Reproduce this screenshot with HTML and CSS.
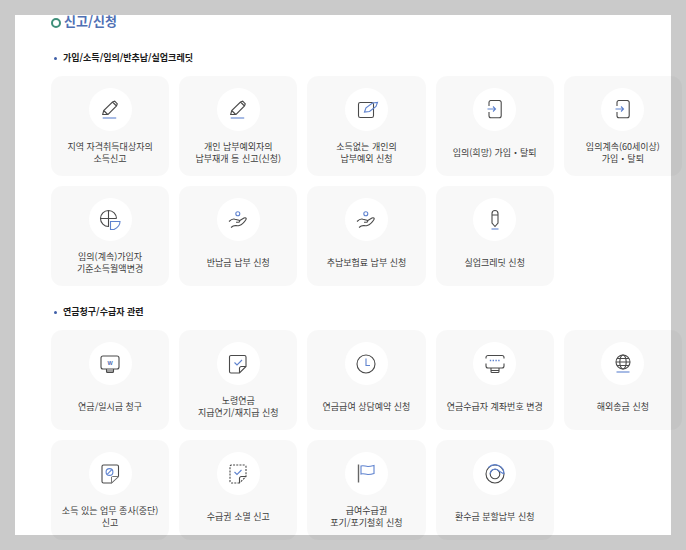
FILE: index.html
```html
<!DOCTYPE html>
<html lang="ko">
<head>
<meta charset="utf-8">
<title>신고/신청</title>
<link rel="stylesheet" href="styles.css">
</head>
<body>
<main class="panel">
  <h2 class="title">신고/신청</h2>
  <h3 class="sub">가입/소득/임의/반추납/실업크레딧</h3>
  <ul class="grid">
    <li class="card"><span class="ico"><svg viewBox="0 0 20 20"><use href="#i-pen"/></svg></span><p>지역 자격취득대상자의<br>소득신고</p></li>
    <li class="card"><span class="ico"><svg viewBox="0 0 20 20"><use href="#i-pen"/></svg></span><p>개인 납부예외자의<br>납부재개 등 신고(신청)</p></li>
    <li class="card"><span class="ico"><svg viewBox="0 0 20 20"><rect class="k" x="2.500" y="2.500" width="15" height="15" rx="1.800"/><path class="b" d="M8.500 12l1.500-4.200L16.500 3l5 -.5-1.500 4-6.500 5z"/></svg></span><p>소득없는 개인의<br>납부예외 신청</p></li>
    <li class="card"><span class="ico"><svg viewBox="0 0 20 20"><use href="#i-door"/></svg></span><p>임의(희망) 가입・탈퇴</p></li>
    <li class="card"><span class="ico"><svg viewBox="0 0 20 20"><use href="#i-door"/></svg></span><p>임의계속(60세이상)<br>가입・탈퇴</p></li>
    <li class="card"><span class="ico"><svg viewBox="0 0 20 20"><path class="k" d="M9 16.500H8.500a8 8 0 1 1 8-8M8.500 .5v16M.5 8.500h16"/><path class="b" d="M10.500 11.500H20c0 3-2 6-6 8h-3.500z"/></svg></span><p>임의(계속)가입자<br>기준소득월액변경</p></li>
    <li class="card"><span class="ico"><svg viewBox="0 0 20 20"><use href="#i-hand"/></svg></span><p>반납금 납부 신청</p></li>
    <li class="card"><span class="ico"><svg viewBox="0 0 20 20"><use href="#i-hand"/></svg></span><p>추납보험료 납부 신청</p></li>
    <li class="card"><span class="ico"><svg viewBox="0 0 20 20"><path class="k" d="M7 3.500a3 3 0 0 1 6 0V13l-3 3.500L7 13zM7 5h6"/><path class="b" d="M6.500 19h7"/></svg></span><p>실업크레딧 신청</p></li>
  </ul>
  <h3 class="sub sub-next">연금청구/수급자 관련</h3>
  <ul class="grid">
    <li class="card"><span class="ico"><svg viewBox="0 0 20 20"><rect class="k" x="1" y="2" width="18" height="13" rx="2"/><path class="k" d="M6.500 15v2.500a1 1 0 0 0 1 1h5a1 1 0 0 0 1-1V15M6.500 17h7"/><text class="won" x="10" y="10.700">W</text></svg></span><p>연금/일시금 청구</p></li>
    <li class="card"><span class="ico"><svg viewBox="0 0 20 20"><path class="k" d="M11.500 19H3a1.500 1.500 0 0 1-1.500-1.500V3A1.500 1.500 0 0 1 3 1.500h13.500A1.500 1.500 0 0 1 18 3v9.500z"/><path class="k" d="M11.500 19v-4a2 2 0 0 1 2-2.500H18"/><path class="b" d="M6.500 8.500l2.500 2.500 5-5"/></svg></span><p>노령연금<br>지급연기/재지급 신청</p></li>
    <li class="card"><span class="ico"><svg viewBox="0 0 20 20"><circle class="k" cx="10" cy="10" r="9"/><path class="b" d="M10 4.500V11.500h4"/></svg></span><p>연금급여 상담예약 신청</p></li>
    <li class="card"><span class="ico"><svg viewBox="0 0 20 20"><path class="k" d="M1 4.500V3.500a2 2 0 0 1 2-2h14a2 2 0 0 1 2 2v1M1 9.500v2.500a2 2 0 0 0 2 2h14a2 2 0 0 0 2-2V9.500M6 14.500v3a1 1 0 0 0 1 1h6a1 1 0 0 0 1-1v-3M6 16.500h8"/><path class="dots" d="M4.800 6.500h11"/></svg></span><p>연금수급자 계좌번호 변경</p></li>
    <li class="card"><span class="ico"><svg viewBox="0 0 20 20"><circle class="k" cx="10" cy="8" r="7"/><ellipse class="k" cx="10" cy="8" rx="3.200" ry="7"/><path class="k" d="M3 8h14M4 4.500h12M4 11.500h12"/><path class="b" d="M3.500 18h13"/></svg></span><p>해외송금 신청</p></li>
    <li class="card"><span class="ico"><svg viewBox="0 0 20 20"><path class="k" d="M11.500 19H3.500A1.500 1.500 0 0 1 2 17.500V2.500A1.500 1.500 0 0 1 3.500 1h13.500A1.500 1.500 0 0 1 18.500 2.500V12.500z"/><path class="f" d="M11.500 19V13a1 1 0 0 1 1-.5h6z"/><circle class="b" cx="9.500" cy="8" r="3.400"/><path class="b" d="M7.200 10.300l4.600-4.600"/></svg></span><p>소득 있는 업무 종사(중단)<br>신고</p></li>
    <li class="card"><span class="ico"><svg viewBox="0 0 20 20"><path class="dash" d="M11.500 19H3.500A1.500 1.500 0 0 1 2 17.500V2.500A1.500 1.500 0 0 1 3.500 1h13A1.500 1.500 0 0 1 18 2.500V12.500z"/><path class="k" d="M11.500 19V15a2 2 0 0 1 2-2.500H18"/><path class="b" d="M6.500 8l2.500 2.500 4.500-4.500"/></svg></span><p>수급권 소멸 신고</p></li>
    <li class="card"><span class="ico"><svg viewBox="0 0 20 20"><path class="p" d="M2.500 .5v18"/><path class="b" d="M5 2c3-1 4 .5 7 .5 2 0 4-.5 6-1v8c-2 .7-4 1-6 1-3 0-4-1.500-7-.5z"/></svg></span><p>급여수급권<br>포기/포기철회 신청</p></li>
    <li class="card"><span class="ico"><svg viewBox="0 0 20 20"><circle class="k" cx="10" cy="10" r="9"/><circle class="k" cx="10" cy="10" r="4.800"/><path class="b" d="M3.500 3.500a9 9 0 0 1 15.500 6.500M5.200 10a4.800 4.800 0 0 1 8.300-3.300l5.500 3.300"/></svg></span><p>환수금 분할납부 신청</p></li>
  </ul>
</main>
<svg class="defs" aria-hidden="true">
  <symbol id="i-pen" viewBox="0 0 20 20"><path class="k" d="M2.700 14.500l1-4L12.500 2l2.200-.8 2.600 2.600-.8 2.200-8.500 8.500zM3.700 10.500l4 4M12.500 2l4 4"/><path class="b" d="M2.700 18h13.500"/></symbol>
  <symbol id="i-door" viewBox="0 0 20 20"><path class="k" d="M4 6V2.500a2 2 0 0 1 2-2h8.200a2 2 0 0 1 2 2v13.300a2 2 0 0 1-2 2H6a2 2 0 0 1-2-2V12"/><path class="b" d="M2.500 9h8M8 6.500L10.500 9 8 11.500"/></symbol>
  <symbol id="i-hand" viewBox="0 0 20 20"><circle class="b" cx="9.800" cy="3.800" r="2"/><path class="k" d="M1 11.500c2-2 4-3 6-2.300l4 1c1.200.5.800 2-.5 2.100H8M11 11l5-3c1.500-.8 2.700.4 2 1.500-1.500 2.500-3.500 5-6.800 6-2.500.7-4-.5-6 .5L3 17.500"/></symbol>
</svg>
</body>
</html>
```
FILE: styles.css
```css
* { box-sizing: border-box; }
html { overflow: hidden; height: 100%; }
body {
  margin: 0;
  height: 100%;
  padding: 15px;
  background: #cacaca;
  overflow: hidden;
  font-family: "Noto Sans CJK KR", "Noto Sans", sans-serif;
  color: #333;
}
.panel {
  width: 656px;
  height: 520px;
  background: #fff;
  padding: 0 0 0 36px;
}
.title {
  position: relative;
  margin: 0;
  padding-left: 13px;
  height: 14px;
  font-size: 13px;
  line-height: 11px;
  font-weight: 700;
  color: #4f70b4;
}
.title::before {
  content: "";
  position: absolute;
  left: 0;
  top: 3px;
  width: 6px;
  height: 6px;
  border: 2px solid #3f8f7a;
  border-radius: 50%;
}
.sub {
  position: relative;
  margin: 22px 0 0;
  padding-left: 12px;
  height: 13px;
  font-size: 9px;
  line-height: 13px;
  font-weight: 700;
  color: #1a1a1a;
}
.sub::before {
  content: "";
  position: absolute;
  left: 3px;
  top: 6px;
  width: 3px;
  height: 3px;
  border-radius: 50%;
  background: #3f5fa8;
}
.sub-next { margin-top: 19px; }
.grid {
  list-style: none;
  margin: 12px 0 0;
  padding: 0;
  width: 631px;
  display: grid;
  grid-template-columns: repeat(5, 1fr);
  grid-auto-rows: 100px;
  gap: 10px;
}
.card {
  display: flex;
  flex-direction: column;
  align-items: center;
  padding-top: 12px;
  border-radius: 11px;
  background: rgba(0, 0, 0, 0.028);
}
.ico {
  flex: none;
  width: 43px;
  height: 43px;
  border-radius: 50%;
  background: #fff;
  display: flex;
  align-items: center;
  justify-content: center;
}
.ico svg { width: 20px; height: 20px; overflow: visible; }
.card p {
  margin: auto 0;
  text-align: center;
  font-size: 9px;
  line-height: 12.500px;
  padding-bottom: 1px;
  color: #3c3c3c;
}
.k { fill: none; stroke: #4a4a4a; stroke-width: 1.100; }
.b { fill: none; stroke: #5f83cf; stroke-width: 1.100; }
.f { fill: #fff; stroke: #777; stroke-width: 1; }
.p { fill: none; stroke: #666; stroke-width: 1.400; }
.dash { fill: none; stroke: #4a4a4a; stroke-width: 1.100; stroke-dasharray: 2 1.200; }
.dots { fill: none; stroke: #5f83cf; stroke-width: 1.400; stroke-dasharray: 1.400 1.400; }
.won { font-size: 5.500px; font-weight: 700; fill: #4a6cb0; text-anchor: middle; font-family: "Liberation Sans", sans-serif; }
.defs { position: absolute; width: 0; height: 0; }
```
